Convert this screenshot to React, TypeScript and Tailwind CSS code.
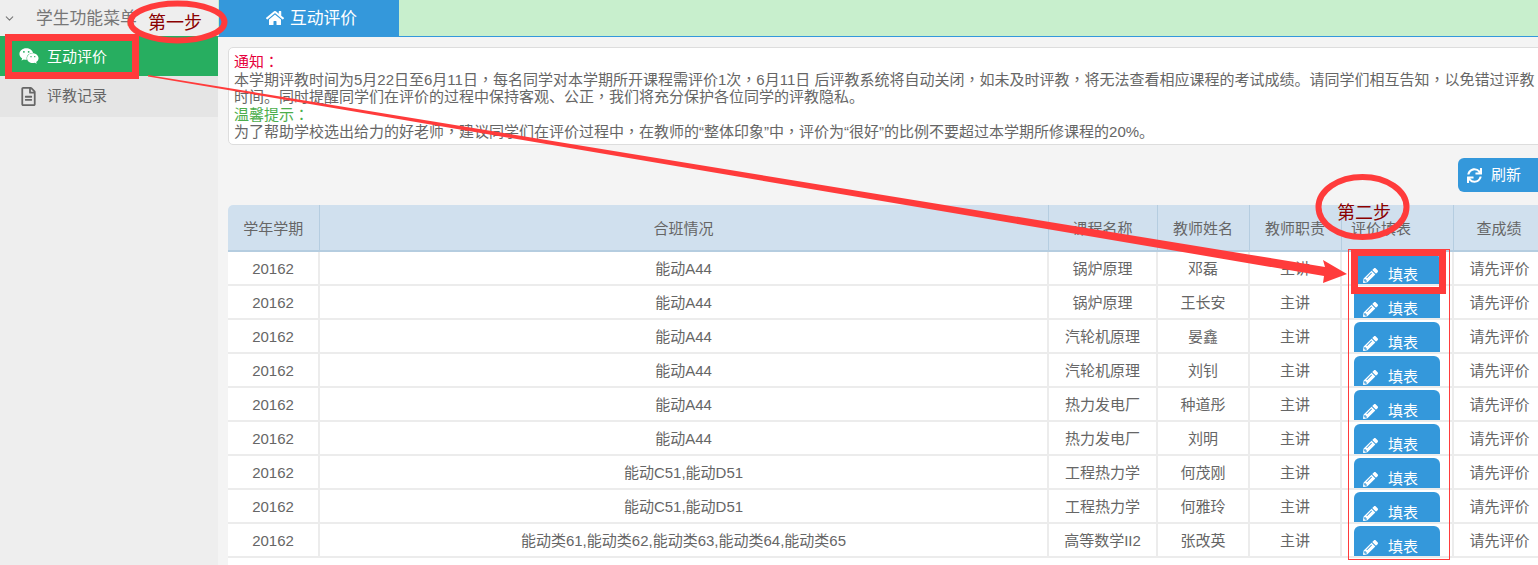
import { ChevronDown } from 'lucide-react';
import { FaHome, FaPencilAlt, FaRegFileAlt, FaSync, FaWeixin } from 'react-icons/fa';

const rows = [
  ['20162', '能动A44', '锅炉原理', '邓磊'],
  ['20162', '能动A44', '锅炉原理', '王长安'],
  ['20162', '能动A44', '汽轮机原理', '晏鑫'],
  ['20162', '能动A44', '汽轮机原理', '刘钊'],
  ['20162', '能动A44', '热力发电厂', '种道彤'],
  ['20162', '能动A44', '热力发电厂', '刘明'],
  ['20162', '能动C51,能动D51', '工程热力学', '何茂刚'],
  ['20162', '能动C51,能动D51', '工程热力学', '何雅玲'],
  ['20162', '能动类61,能动类62,能动类63,能动类64,能动类65', '高等数学II2', '张改英'],
];

const headers = ['学年学期', '合班情况', '课程名称', '教师姓名', '教师职责', '评价填表', '查成绩'];
const widths = ['w-[91px]', 'w-[729px]', 'w-[109px]', 'w-[92px]', 'w-[92px]', 'w-[112px] pr-[32px]', 'w-[92px]'];

// comma and colon sit centred in their cell in the reference, so they take the TC glyphs
function Line({ text, className }: { text: string; className?: string }) {
  return (
    <div className={`h-[17.5px] ${className ?? ''}`}>
      {text.split(/([，：])/).map((part, i) =>
        part === '，' || part === '：' ? (
          <span key={i} className="[font-family:'Noto_Sans_CJK_TC',sans-serif]">{part}</span>
        ) : (
          part
        ),
      )}
    </div>
  );
}

export default function App() {
  return (
    <div className="relative flex h-[565px] w-[1538px] overflow-hidden bg-[#f4f4f4] text-[15px] text-[#666] [font-family:'Liberation_Sans','Noto_Sans_CJK_SC',sans-serif]">
      {/* Sidebar */}
      <aside className="h-full w-[218px] shrink-0 bg-[#eeeeee]">
        <div className="flex h-9 items-center pl-[3px] text-[16.8px] text-[#777]">
          <ChevronDown className="h-[13px] w-[13px]" strokeWidth={2} />
          <span className="ml-5 whitespace-nowrap pt-[2px]">学生功能菜单</span>
        </div>
        <div className="flex h-10 items-center bg-[#27ae60] pl-[19px] text-white">
          <FaWeixin className="h-[20px] w-[20px]" />
          <span className="ml-2 pt-[2px]">互动评价</span>
        </div>
        <div className="flex h-[41px] items-center bg-[#e5e5e5] pl-[21px]">
          <FaRegFileAlt className="h-[19px] w-[15px]" />
          <span className="ml-[11px]">评教记录</span>
        </div>
      </aside>

      {/* Main */}
      <main className="flex min-w-0 flex-1 flex-col">
        <div className="flex h-[37px] shrink-0 border-b border-[#3498db] bg-[#c8efcd]">
          <div className="ml-px flex h-9 w-[180px] items-center gap-[6px] bg-[#3498db] pl-[47px] text-[16.8px] text-white">
            <FaHome className="h-[18px] w-[18px]" />
            <span className="pt-[2px]">互动评价</span>
          </div>
        </div>

        <div className="ml-[10px] mt-[10px] h-[98px] w-[1400px] shrink-0 whitespace-nowrap rounded-[5px] border border-[#ddd] bg-white px-[5px] pt-[4px] leading-[17.5px]">
          <Line className="text-[#e6003c]" text="通知：" />
          <Line text="本学期评教时间为5月22日至6月11日，每名同学对本学期所开课程需评价1次，6月11日 后评教系统将自动关闭，如未及时评教，将无法查看相应课程的考试成绩。请同学们相互告知，以免错过评教" />
          <Line text="时间。同时提醒同学们在评价的过程中保持客观、公正，我们将充分保护各位同学的评教隐私。" />
          <Line className="text-[#4cae4c]" text="温馨提示：" />
          <Line text="为了帮助学校选出给力的好老师，建议同学们在评价过程中，在教师的“整体印象”中，评价为“很好”的比例不要超过本学期所修课程的20%。" />
        </div>

        <div className="ml-[1240px] mt-[13px] flex h-[34px] w-[90px] shrink-0 items-center rounded-[6px] bg-[#3498db] pl-[9px] text-white">
          <FaSync className="h-[15px] w-[15px]" />
          <span className="ml-[9px]">刷新</span>
        </div>

        <div className="ml-[10px] mt-[13px] w-[1400px] flex-1 rounded-t-[5px] bg-white">
          <table className="w-[1317px] table-fixed border-collapse text-center">
            <thead>
              <tr className="h-[46px] bg-[#d0e0ee]">
                {headers.map((h, i) => (
                  <th key={h} className={`${widths[i]} border-b-2 border-r border-[#b5cde0] p-0 pt-[4px] font-normal first:rounded-tl-[5px]`}>
                    {h}
                  </th>
                ))}
              </tr>
            </thead>
            <tbody>
              {rows.map((r, i) => (
                <tr key={i} className="h-[34px] border-b-2 border-[#ececec]">
                  {r.map((c, j) => (
                    <td key={j} className="border-r-2 border-[#ececec] p-0 pt-[2px]">{c}</td>
                  ))}
                  <td className="border-r-2 border-[#ececec] p-0 pt-[2px]">主讲</td>
                  <td className="border-r-2 border-[#ececec] p-0 align-bottom">
                    <div className="ml-[12px] flex h-[30px] w-[86px] items-center rounded-t-[6px] bg-[#3498db] pl-[9px] pt-[12px] text-white">
                      <FaPencilAlt className="h-[15px] w-[15px]" />
                      <span className="ml-[10px]">填表</span>
                    </div>
                  </td>
                  <td className="p-0 pt-[2px]">请先评价</td>
                </tr>
              ))}
            </tbody>
          </table>
        </div>
      </main>

      {/* Hand-drawn annotations on top of the page */}
      <svg className="pointer-events-none absolute left-0 top-0" width="1538" height="565" viewBox="0 0 1538 565" fill="none">
        <ellipse cx="177.5" cy="22" rx="47" ry="18.5" stroke="#ff3b3b" strokeWidth="6" />
        <ellipse cx="1362.5" cy="207" rx="44" ry="30" stroke="#ff3b3b" strokeWidth="6" />
        <path d="M148 75 L1325 267 L1323 260 L1347 274 L1323 283 L1324 276 L148 76.5 Z" fill="#ff3b3b" />
      </svg>
      <div className="absolute left-[5px] top-[34px] h-[45px] w-[134px] border-[7px] border-[#ff3b3b]" />
      <div className="absolute left-[1351px] top-[249px] h-[45px] w-[95px] border-[7px] border-[#ff3b3b]" />
      <div className="absolute left-[1348px] top-[249px] h-[311px] w-[102px] border border-[#ff3b3b]" />
      <span className="absolute left-[148px] top-[13px] text-[18px] leading-5 text-[#8b0000] [font-family:'Liberation_Serif','Noto_Sans_CJK_SC',serif]">第一步</span>
      <span className="absolute left-[1337px] top-[203px] text-[18px] leading-5 text-[#8b0000] [font-family:'Liberation_Serif','Noto_Sans_CJK_SC',serif]">第二步</span>
    </div>
  );
}
